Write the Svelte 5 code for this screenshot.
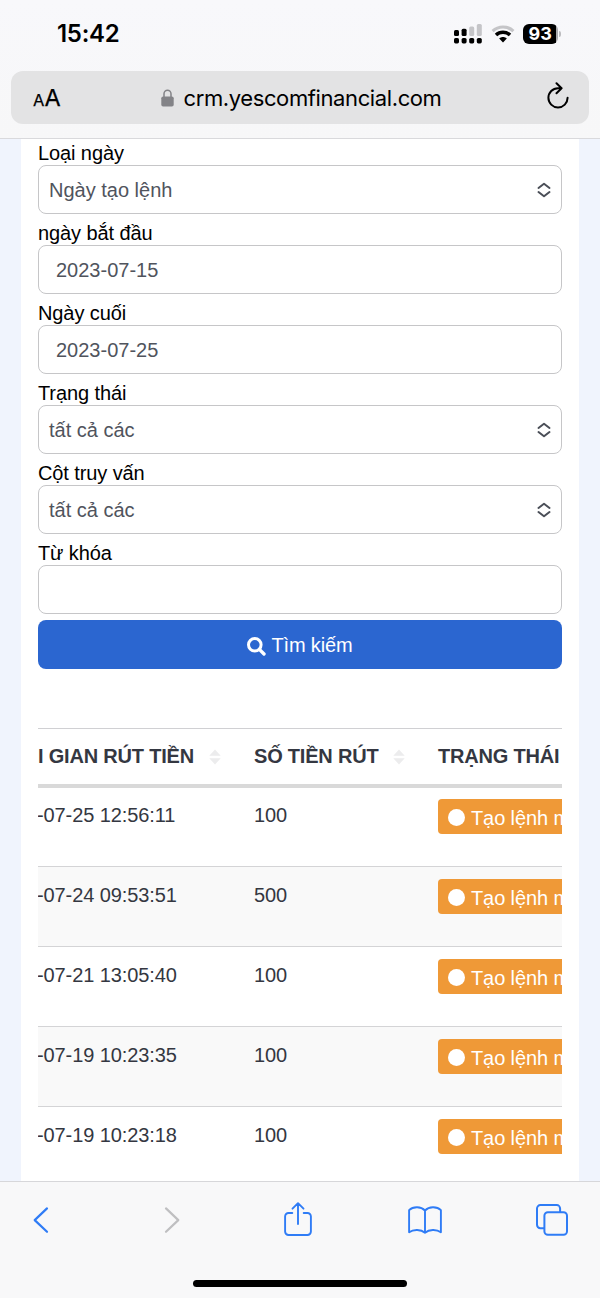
<script>
  const fields = [
    { label: 'Loại ngày', value: 'Ngày tạo lệnh', kind: 'select' },
    { label: 'ngày bắt đầu', value: '2023-07-15', kind: 'date' },
    { label: 'Ngày cuối', value: '2023-07-25', kind: 'date' },
    { label: 'Trạng thái', value: 'tất cả các', kind: 'select' },
    { label: 'Cột truy vấn', value: 'tất cả các', kind: 'select' },
    { label: 'Từ khóa', value: '', kind: 'text' },
  ];
  const rows = [
    { time: '-07-25 12:56:11', amount: '100' },
    { time: '-07-24 09:53:51', amount: '500' },
    { time: '-07-21 13:05:40', amount: '100' },
    { time: '-07-19 10:23:35', amount: '100' },
    { time: '-07-19 10:23:18', amount: '100' },
  ];
</script>

{#snippet sorter()}
  <svg class="sorter" width="12" height="16" viewBox="0 0 12 16"><path d="M0.3 6.8 6 0.5l5.7 6.3zM0.3 9.2 6 15.5l5.7-6.3z" fill="#ececed" /></svg>
{/snippet}

<div class="screen">
  <header>
    <div class="status">
      <span class="clock">15:42</span>
      <div class="indicators">
        <svg width="28" height="20" viewBox="0 0 28 20">
          <g fill="#000">
            <rect x="0" y="14" width="5" height="5.4" rx="1.6" /><rect x="7.6" y="14" width="5" height="5.4" rx="1.6" />
            <rect x="15.2" y="14" width="5" height="5.4" rx="1.6" /><rect x="22.8" y="14" width="5" height="5.4" rx="1.6" />
            <rect x="0" y="6" width="5" height="6" rx="1.5" /><rect x="7.6" y="4.7" width="5" height="7.3" rx="1.5" />
          </g>
          <g fill="#c5c5c8"><rect x="15.2" y="2.6" width="5" height="9.4" rx="1.5" /><rect x="22.8" y="0" width="5" height="12" rx="1.5" /></g>
        </svg>
        <svg class="wifi" width="24" height="18" viewBox="0 0 24 18" fill="none">
          <path d="M1.6 6.1C7.5 .6 16.5 .6 22.4 6.1" stroke="#c5c5c8" stroke-width="3.2" />
          <path d="M5 10c3.9-3.7 10.1-3.7 14 0" stroke="#000" stroke-width="3.5" />
          <path d="M8.2 13.5c2.1-2 5.5-2 7.6 0L12 17.4z" fill="#000" />
        </svg>
        <div class="battery">93</div>
        <i class="cap"></i>
      </div>
    </div>
    <div class="address">
      <span class="aa"><small>A</small>A</span>
      <div class="host">
        <svg width="13" height="18" viewBox="0 0 13 18"><path d="M3 8V4.7a3.5 3.5 0 0 1 7 0V8" fill="none" stroke="#838387" stroke-width="1.5" /><rect x=".3" y="7.5" width="12.4" height="10" rx="1.8" fill="#838387" /></svg>
        <span>crm.yescomfinancial.com</span>
      </div>
      <svg class="reload" width="24" height="28" viewBox="0 0 24 28" fill="none" stroke="#000" stroke-width="2" stroke-linecap="round" stroke-linejoin="round"><path d="M15.6 6.2H12A9.6 9.6 0 1 0 21.6 15.8M10.5 1.3l5.1 4.9-5.1 5" /></svg>
    </div>
  </header>

  <main>
    <div class="panel">
      <form>
        {#each fields as f}
          <div class="field">
            <div class="label">{f.label}</div>
            <div class="control {f.kind}">
              <span>{f.value}</span>
              {#if f.kind === 'select'}
                <svg width="14" height="16" viewBox="0 0 14 16" fill="none" stroke="#4b4f58" stroke-width="2" stroke-linecap="round" stroke-linejoin="round"><path d="M1.5 6 7 1.7 12.5 6M1.5 10 7 14.3 12.5 10" /></svg>
              {/if}
            </div>
          </div>
        {/each}
        <button type="button">
          <svg width="19" height="19" viewBox="0 0 19 19" fill="none" stroke="#fff" stroke-width="3"><circle cx="7.8" cy="7.8" r="6.3" /><path d="m12.4 12.4 4.6 4.6" stroke-width="3.4" stroke-linecap="round" /></svg>
          <span>Tìm kiếm</span>
        </button>
      </form>

      <div class="table">
        <div class="row head">
          <div><span>I GIAN RÚT TIỀN</span>{@render sorter()}</div>
          <div><span>SỐ TIỀN RÚT</span>{@render sorter()}</div>
          <div><span>TRẠNG THÁI</span></div>
        </div>
        {#each rows as r}
          <div class="row body">
            <div class="time">{r.time}</div>
            <div>{r.amount}</div>
            <div class="badge"><i></i><span>Tạo lệnh mới</span></div>
          </div>
        {/each}
      </div>
    </div>
  </main>

  <footer>
    <nav>
      <svg width="16" height="28" viewBox="0 0 16 28" fill="none" stroke="#2f7cf6" stroke-width="2.2" stroke-linecap="round" stroke-linejoin="round"><path d="M14 2.4 1.7 14.1 14 25.8" /></svg>
      <svg width="16" height="28" viewBox="0 0 16 28" fill="none" stroke="#bfbfc1" stroke-width="2.2" stroke-linecap="round" stroke-linejoin="round"><path d="M2 2.4 14.3 14.1 2 25.8" /></svg>
      <svg class="share" width="28" height="36" viewBox="0 0 28 36" fill="none" stroke="#2f7cf6" stroke-width="1.9" stroke-linecap="round" stroke-linejoin="round"><path d="M8.3 12H4.5A3.4 3.4 0 0 0 1.1 15.4v15.2A3.4 3.4 0 0 0 4.5 34h19a3.4 3.4 0 0 0 3.4-3.4V15.4a3.4 3.4 0 0 0-3.4-3.4h-3.8M14 23V2.2M8.5 7.7 14 2.2l5.5 5.5" /></svg>
      <svg width="34" height="28" viewBox="0 0 34 28" fill="none" stroke="#2f7cf6" stroke-width="1.9" stroke-linejoin="round"><path d="M17 26.8c-4-3.5-11.5-3.8-15.9-.5V4.2C5.1.2 13 .3 17 4.5zM17 26.8c4-3.5 11.5-3.8 15.9-.5V4.2C28.9.2 21 .3 17 4.5z" /></svg>
      <svg width="32" height="32" viewBox="0 0 32 32" fill="none" stroke="#2f7cf6" stroke-width="2"><path d="M8.3 24.2H4.4A3.4 3.4 0 0 1 1 20.8V4.5A3.4 3.4 0 0 1 4.4 1.1h16.3a3.4 3.4 0 0 1 3.4 3.4v3.7" /><rect x="8.4" y="8.2" width="22.6" height="22.6" rx="3.5" /></svg>
    </nav>
    <div class="home"></div>
  </footer>
</div>

<style>
  :global(body) { margin: 0; }
  .screen { width: 600px; height: 1298px; display: flex; flex-direction: column; overflow: hidden; background: #f0f4fd; font-family: "Liberation Sans", Arial, sans-serif; font-size: 20px; color: #000; }
  svg { display: block; flex: none; }
  header { box-sizing: border-box; height: 139px; flex: none; background: linear-gradient(#f8f8fb, #f7f7f8); border-bottom: 1.5px solid #d9d9dc; }
  .status { height: 71px; box-sizing: border-box; display: flex; justify-content: space-between; padding: 0 39.5px 0 57px; font-family: Inter, sans-serif; }
  .clock { font-weight: 600; font-size: 24px; line-height: 24px; padding-top: 22px; letter-spacing: -.3px; }
  .indicators { display: flex; align-items: flex-start; padding-top: 24px; }
  .wifi { margin: 1px 8px 0 9px; }
  .battery { width: 34.5px; height: 20px; border-radius: 6px; background: linear-gradient(90deg, #000 33px, #a9a9ac 33px); color: #fff; font-weight: 700; font-size: 18px; line-height: 20px; text-align: center; }
  .cap { width: 2px; height: 6px; margin: 7px 0 0 1px; border-radius: 0 2px 2px 0; background: #bdbdc0; }
  .address { height: 53px; margin: 0 11px; border-radius: 12px; background: #e3e3e4; display: grid; grid-template-columns: 103px 1fr 100px; align-items: center; font-family: Inter, sans-serif; }
  .aa { padding-left: 22px; padding-top: 2px; font-size: 23.5px; line-height: 30px; white-space: nowrap; -webkit-text-stroke: .25px #000; }
  .aa small { font-size: 16.5px; }
  .host { display: flex; justify-content: center; align-items: center; gap: 9px; font-size: 22px; letter-spacing: -.39px; white-space: nowrap; }
  .reload { justify-self: end; margin-right: 19px; margin-top: -3px; }
  main { flex: 1; min-height: 0; overflow: hidden; padding: 0 21px; }
  .panel { background: #fff; height: 100%; padding: 0 17px; }
  .label { height: 24px; line-height: 25px; margin-top: 7px; white-space: nowrap; letter-spacing: -.1px; }
  .field:first-child .label { margin-top: 0; padding-top: 2px; }
  .control { box-sizing: border-box; height: 49px; border: 1.5px solid #c6c6c8; border-radius: 8px; display: flex; align-items: center; justify-content: space-between; padding: 1px 10px 0 10px; color: #50545d; }
  .date { padding-left: 17px; }
  button { margin: 6px 0 0; width: 100%; height: 49px; border: 0; border-radius: 8px; background: #2b66d0; color: #fff; font: inherit; letter-spacing: -.15px; display: flex; align-items: center; justify-content: center; gap: 5px; padding: 0; }
  button svg { margin-top: 4px; }
  button span { margin-top: 2px; }
  .table { margin-top: 59px; overflow: hidden; color: #343741; }
  .row { display: grid; grid-template-columns: 216px 184px 190px; white-space: nowrap; box-sizing: border-box; width: 524px; }
  .head { height: 60px; border-top: 1.5px solid #d0d0d3; border-bottom: 4px solid #d9d9d9; font-weight: 700; align-items: center; letter-spacing: -.2px; }
  .head > div { display: flex; align-items: center; gap: 15px; }
  .body { height: 80px; border-top: 1.5px solid #d4d4d6; line-height: 24px; padding-top: 16px; align-items: start; letter-spacing: -.1px; }
  .body:nth-child(2) { height: 78px; border-top: 0; padding-top: 15px; }
  .body:nth-child(odd) { background: #f9f9f9; }
  .time { margin-left: -1px; }
  .badge { height: 35px; margin-top: -4px; border-radius: 4px; background: #ef9937; color: #fff; display: flex; align-items: center; gap: 6px; padding-left: 10px; }
  .badge i { width: 17px; height: 17px; margin-top: 1px; border-radius: 50%; background: #fff; }
  .badge span { margin-top: 2px; }
  footer { box-sizing: border-box; height: 117px; flex: none; background: #f8f8f9; border-top: 1.5px solid #d7d7da; }
  nav { height: 75px; display: grid; grid-template-columns: 81px 181px 71px 184px 70px; justify-items: center; align-items: center; }
  .share { margin-top: -2px; }
  .home { width: 214px; height: 7px; border-radius: 4px; background: #000; margin: 23px auto 0; }
</style>
